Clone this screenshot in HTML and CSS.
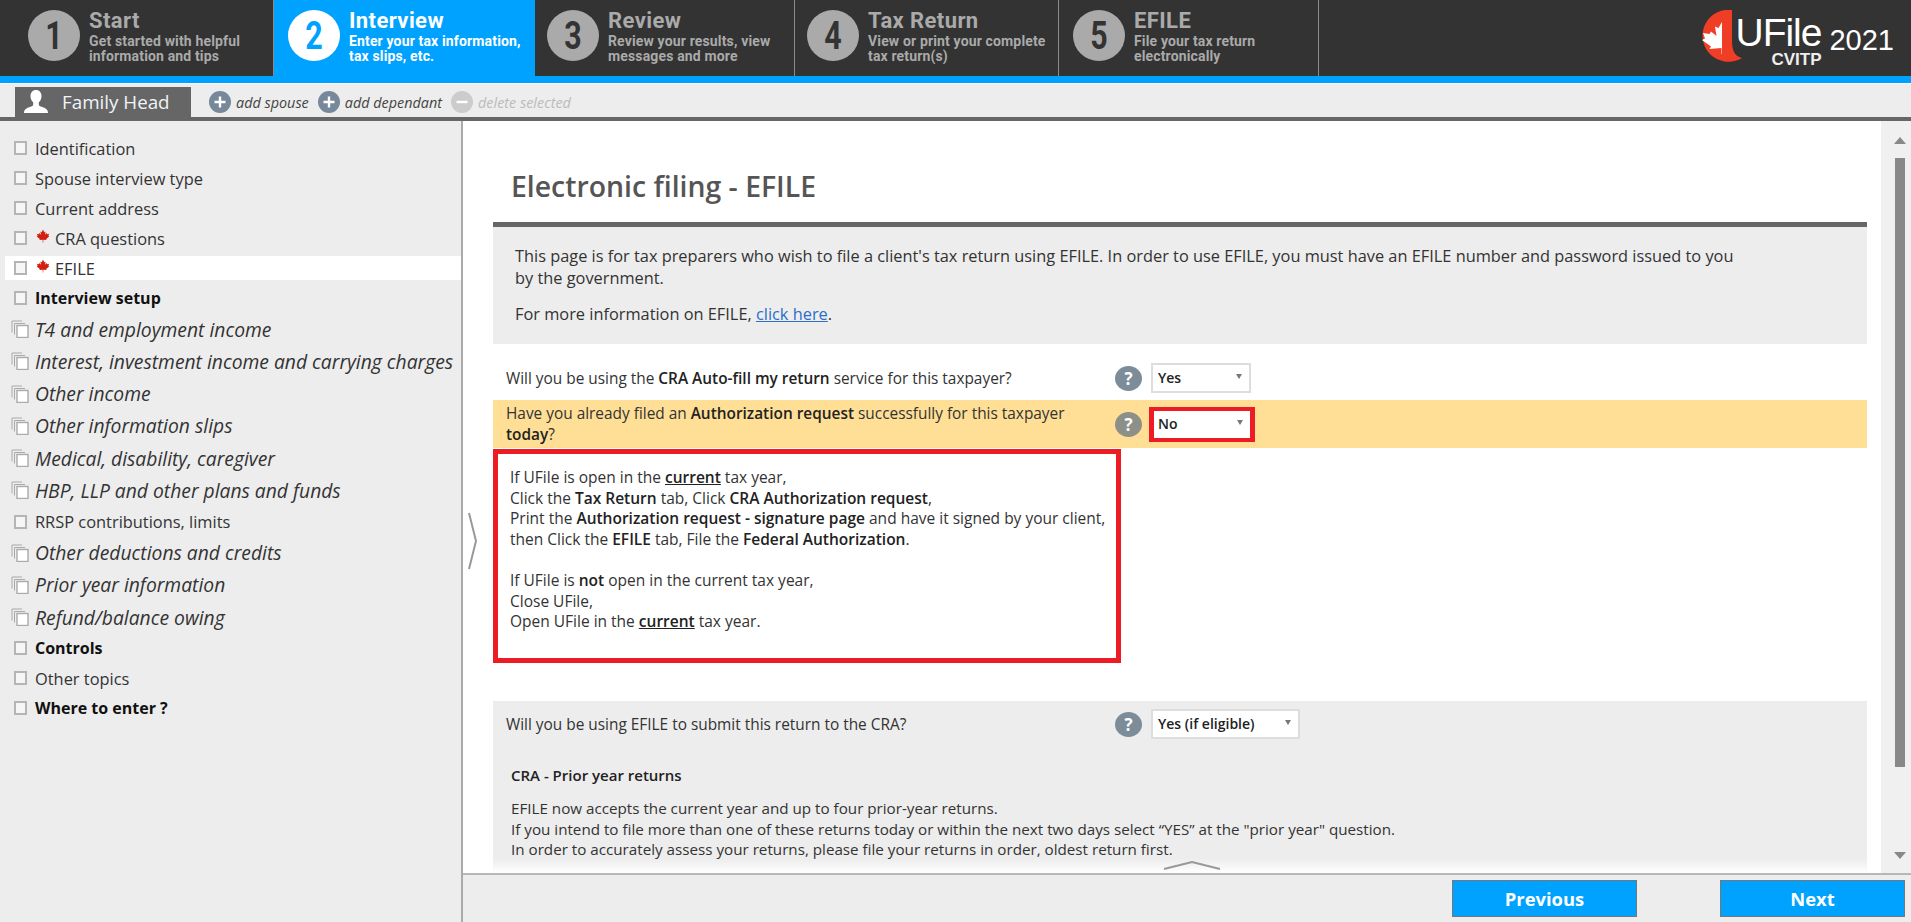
FILE: index.html
```html
<!DOCTYPE html>
<html lang="en">
<head>
    <meta charset="UTF-8">
    <meta name="viewport" content="width=device-width, initial-scale=1.0">
    <title>UFile CVITP 2021 - Electronic filing</title>
    <link rel="stylesheet" href="styles.css">
</head>
<body>
    <svg class="sprites" width="0" height="0">
        <symbol id="leaf" viewBox="0 0 24 24">
            <path d="M12 1 9.8 5.5 7.6 4.4 8.6 10 5.6 7 4.9 8.9 1.6 8.3 2.8 12 1.2 13 6.6 17.2 5.9 19 11.5 18.3V23h1V18.3L18.1 19 17.4 17.2 22.8 13 21.2 12 22.4 8.3 19.1 8.9 18.4 7 15.4 10 16.4 4.4 14.2 5.5Z"/>
        </symbol>
        <symbol id="pages" viewBox="0 0 18 18">
            <path d="M1 12.5V1h10M3.5 14.5V3.5H14" fill="none" stroke="#aaa" stroke-width="1"/>
            <rect x="6" y="5.5" width="11" height="12" fill="#fff" stroke="#aaa" stroke-width="1.4"/>
        </symbol>
        <symbol id="plus" viewBox="0 0 22 22">
            <circle cx="11" cy="11" r="11"/>
            <path d="M11 5.5v11M5.5 11h11" stroke="#fff" stroke-width="2.4"/>
        </symbol>
    </svg>

    <header class="top-bar">
        <nav class="steps">
            <div class="step step-first"><span class="step-num"><span class="step-digit">1</span></span><div><div class="step-title">Start</div><div class="step-desc">Get started with helpful<br>information and tips</div></div></div>
            <div class="step step-active"><span class="step-num"><span class="step-digit">2</span></span><div><div class="step-title">Interview</div><div class="step-desc">Enter your tax information,<br>tax slips, etc.</div></div></div>
            <div class="step step-third"><span class="step-num"><span class="step-digit">3</span></span><div><div class="step-title">Review</div><div class="step-desc">Review your results, view<br>messages and more</div></div></div>
            <div class="step step-fourth"><span class="step-num"><span class="step-digit">4</span></span><div><div class="step-title">Tax Return</div><div class="step-desc">View or print your complete<br>tax return(s)</div></div></div>
            <div class="step step-fifth"><span class="step-num"><span class="step-digit">5</span></span><div><div class="step-title">EFILE</div><div class="step-desc">File your tax return<br>electronically</div></div></div>
        </nav>
        <div class="logo">
            <svg class="logo-mark" width="50" height="52" viewBox="0 0 50 52">
                <path d="M36 0A26 26 0 1 0 46 48C38 46 36 40 36 30Z" fill="#f03e26"/>
                <path d="M26 12 22.5 18 19 16.5 20.5 26 15 21.5 13.5 24 7 23 9 28.5 6 30 15 36.5 13.5 39 25.5 38V44H26Z" fill="#fff"/>
            </svg>
            <div class="logo-name">
                <span class="logo-ufile">UFile</span>
                <span class="logo-cvitp">CVITP</span>
            </div>
            <span class="logo-year">2021</span>
        </div>
    </header>
    <div class="blue-line"></div>

    <div class="tab-bar">
        <div class="tab">
            <svg width="26" height="26" viewBox="0 0 26 26"><path d="M13 1c3.600 0 5.500 2.700 5.500 6 0 2.700-1.100 5-2.700 6.300v2.200c0 1.300 1 1.700 3.500 2.600 3 1.100 5.700 2.200 5.700 5.900H1c0-3.700 2.700-4.800 5.700-5.900 2.500-.9 3.500-1.300 3.500-2.600v-2.200C8.600 12 7.500 9.700 7.500 7c0-3.300 1.900-6 5.500-6Z" fill="#fff"/></svg>
            <span>Family Head</span>
        </div>
        <a class="tab-action"><svg width="22" height="22"><use href="#plus"/></svg>add spouse</a>
        <a class="tab-action"><svg width="22" height="22"><use href="#plus"/></svg>add dependant</a>
        <a class="tab-action tab-action-off"><svg width="22" height="22" viewBox="0 0 22 22"><circle cx="11" cy="11" r="11"/><path d="M5.500 11h11" stroke="#fff" stroke-width="2.400"/></svg>delete selected</a>
    </div>

    <div class="workspace">
        <aside class="sidebar">
            <div class="nav-item"><i class="box"></i>Identification</div>
            <div class="nav-item"><i class="box"></i>Spouse interview type</div>
            <div class="nav-item"><i class="box"></i>Current address</div>
            <div class="nav-item"><i class="box"></i><svg class="nav-leaf" width="14" height="14"><use href="#leaf"/></svg>CRA questions</div>
            <div class="nav-item nav-current"><i class="box"></i><svg class="nav-leaf" width="14" height="14"><use href="#leaf"/></svg>EFILE</div>
            <div class="nav-item nav-bold"><i class="box"></i>Interview setup</div>
            <div class="nav-group"><svg width="18" height="18"><use href="#pages"/></svg>T4 and employment income</div>
            <div class="nav-group"><svg width="18" height="18"><use href="#pages"/></svg>Interest, investment income and carrying charges</div>
            <div class="nav-group"><svg width="18" height="18"><use href="#pages"/></svg>Other income</div>
            <div class="nav-group"><svg width="18" height="18"><use href="#pages"/></svg>Other information slips</div>
            <div class="nav-group"><svg width="18" height="18"><use href="#pages"/></svg>Medical, disability, caregiver</div>
            <div class="nav-group"><svg width="18" height="18"><use href="#pages"/></svg>HBP, LLP and other plans and funds</div>
            <div class="nav-item"><i class="box"></i>RRSP contributions, limits</div>
            <div class="nav-group"><svg width="18" height="18"><use href="#pages"/></svg>Other deductions and credits</div>
            <div class="nav-group"><svg width="18" height="18"><use href="#pages"/></svg>Prior year information</div>
            <div class="nav-group"><svg width="18" height="18"><use href="#pages"/></svg>Refund/balance owing</div>
            <div class="nav-item nav-bold"><i class="box"></i>Controls</div>
            <div class="nav-item"><i class="box"></i>Other topics</div>
            <div class="nav-item nav-bold"><i class="box"></i>Where to enter ?</div>
        </aside>

        <div class="right-col">
            <div class="main-row">
                <main class="content">
                    <svg class="side-handle" width="11" height="58" viewBox="0 0 11 58"><path d="M2 1 9 29 2 57" fill="none" stroke="#999" stroke-width="2"/></svg>

                    <h1 class="page-title">Electronic filing - EFILE</h1>
                    <section class="intro">
                        <p>This page is for tax preparers who wish to file a client's tax return using EFILE. In order to use EFILE, you must have an EFILE number and password issued to you by the government.</p>
                        <p>For more information on EFILE, <a href="#">click here</a>.</p>
                    </section>

                    <div class="question question-first">
                        <div class="question-text">Will you be using the <b>CRA Auto-fill my return</b> service for this taxpayer?</div>
                        <span class="help">?</span>
                        <div class="select">Yes</div>
                    </div>
                    <div class="question question-warn">
                        <div class="question-text">Have you already filed an <b>Authorization request</b> successfully for this taxpayer <b>today</b>?</div>
                        <span class="help">?</span>
                        <div class="select select-flagged">No</div>
                    </div>

                    <div class="callout">
                        If UFile is open in the <b><u>current</u></b> tax year,<br>
                        Click the <b>Tax Return</b> tab, Click <b>CRA Authorization request</b>,<br>
                        Print the <b>Authorization request - signature page</b> and have it signed by your client,<br>
                        then Click the <b>EFILE</b> tab, File the <b>Federal Authorization</b>.<br>
                        <br>
                        If UFile is <b>not</b> open in the current tax year,<br>
                        Close UFile,<br>
                        Open UFile in the <b><u>current</u></b> tax year.
                    </div>

                    <section class="efile-section">
                        <div class="question question-plain">
                            <div class="question-text">Will you be using EFILE to submit this return to the CRA?</div>
                            <span class="help">?</span>
                            <div class="select select-wide">Yes (if eligible)</div>
                        </div>
                        <h3 class="note-title">CRA - Prior year returns</h3>
                        <p class="note">EFILE now accepts the current year and up to four prior-year returns.<br>
                        If you intend to file more than one of these returns today or within the next two days select “YES” at the "prior year" question.<br>
                        In order to accurately assess your returns, please file your returns in order, oldest return first.</p>
                    </section>

                    <div class="fade"></div>
                    <svg class="up-handle" width="58" height="9" viewBox="0 0 58 9"><path d="M1 8 29 1 57 8" fill="none" stroke="#999" stroke-width="2"/></svg>
                </main>
                <div class="scrollbar">
                    <i class="arrow-up"></i>
                    <i class="thumb"></i>
                    <i class="arrow-down"></i>
                </div>
            </div>
            <footer class="footer">
                <button>Previous</button>
                <button>Next</button>
            </footer>
        </div>
    </div>
</body>
</html>
```

FILE: styles.css
```css
* {
    box-sizing: border-box;
}
html, body {
    margin: 0;
    height: 922px;
    overflow: hidden;
}
body {
    display: flex;
    flex-direction: column;
    font-family: "Open Sans", "Noto Sans", sans-serif;
    font-size: 15px;
    color: #333;
    background: #fff;
}
b {
    font-weight: 600;
    color: #222;
}
.sprites {
    position: absolute;
}

/* top bar */
.top-bar {
    display: flex;
    justify-content: space-between;
    height: 76px;
    background: #333;
    font-family: "Roboto", "Liberation Sans", sans-serif;
}
.steps {
    display: flex;
}
.step {
    display: flex;
    align-items: flex-start;
    gap: 9px;
    width: 260px;
    padding: 10px 0 0 12px;
    border-right: 1px solid #8a8a8a;
    color: #aaa;
}
.step-first {
    width: 274px;
    padding-left: 28px;
}
.step-active {
    width: 261px;
    padding-left: 14px;
    background: #00a2ff;
    color: #fff;
    border-right: none;
}
.step-fourth {
    width: 264px;
}
.step-fifth {
    padding-left: 14px;
}
.step-num {
    flex: none;
    display: flex;
    align-items: center;
    justify-content: center;
    width: 52px;
    height: 51px;
    border-radius: 50%;
    background: #aaa;
    color: #333;
    font-size: 38px;
    font-weight: 700;
}
.step-digit {
    display: inline-block;
    transform: scaleX(.8);
}
.step-active .step-num {
    background: #fff;
    color: #00a2ff;
}
.step-title {
    font-size: 22px;
    font-weight: 700;
    letter-spacing: .4px;
    line-height: 22px;
}
.step-desc {
    font-size: 14px;
    font-weight: 700;
    letter-spacing: .15px;
    line-height: 15px;
    margin-top: 2px;
    white-space: nowrap;
}
.logo {
    display: flex;
    align-items: flex-start;
    padding: 10px 17px 0 0;
    color: #fff;
    font-family: "Liberation Sans", sans-serif;
}
.logo-name {
    display: flex;
    flex-direction: column;
    align-items: flex-end;
    margin: 4px 0 0 -11px;
}
.logo-ufile {
    font-size: 39px;
    letter-spacing: -1px;
    line-height: 38px;
}
.logo-cvitp {
    font-size: 17px;
    font-weight: 700;
    line-height: 15px;
    color: #eee;
}
.logo-year {
    font-size: 29px;
    line-height: 32px;
    margin: 14px 0 0 8px;
}
.blue-line {
    height: 7px;
    background: #00a2ff;
}

/* tab bar */
.tab-bar {
    display: flex;
    align-items: flex-end;
    height: 37px;
    margin-top: 1px;
    padding-left: 15px;
    background: #ededed;
    border-bottom: 4px solid #666;
}
.tab {
    display: flex;
    align-items: center;
    gap: 13px;
    width: 176px;
    height: 30px;
    padding-left: 8px;
    margin-right: 18px;
    background: #666;
    color: #f0f4f8;
    font-size: 18.8px;
}
.tab-action {
    display: flex;
    align-items: center;
    gap: 5px;
    height: 30px;
    margin-right: 9px;
    font-size: 14.4px;
    font-style: italic;
    fill: #76889a;
    color: #444;
}
.tab-action-off {
    color: #bbb;
    fill: #ccc;
}

/* sidebar */
.workspace {
    flex: 1;
    display: flex;
    min-height: 0;
}
.sidebar {
    flex: none;
    display: flex;
    flex-direction: column;
    width: 463px;
    padding-top: 12px;
    background: #ededed;
    border-right: 2px solid #aaa;
}
.nav-item, .nav-group {
    display: flex;
    align-items: center;
    margin: 3px 0 3px 5px;
    white-space: nowrap;
}
.nav-item {
    height: 24px;
    padding-left: 9px;
    font-size: 16.4px;
}
.nav-group {
    height: 26.25px;
    padding-left: 6px;
    gap: 6px;
    font-size: 19.3px;
    font-style: italic;
}
.nav-current {
    background: #fff;
}
.nav-bold {
    font-size: 16px;
    font-weight: 700;
    color: #111;
}
.box {
    flex: none;
    width: 13px;
    height: 14px;
    margin-right: 8px;
    background: #f6f6f6;
    border: 2px solid #b5b5b5;
}
.nav-leaf {
    flex: none;
    margin: -4px 5px 0 1px;
    fill: #d21f0f;
}

/* main */
.right-col {
    flex: 1;
    display: flex;
    flex-direction: column;
    min-width: 0;
}
.main-row {
    flex: 1;
    display: flex;
    min-height: 0;
}
.content {
    position: relative;
    flex: 1;
    padding: 0 14px 0 30px;
    overflow: hidden;
}
.page-title {
    margin: 0;
    padding: 47px 0 18px 18px;
    font-size: 28.4px;
    font-weight: 600;
    line-height: 36px;
    color: #555;
}
.intro {
    padding: 18px 130px 19px 22px;
    background: #ededed;
    border-top: 5px solid #666;
    font-size: 16.35px;
    line-height: 22px;
}
.intro p {
    margin: 0 0 14px;
}
.intro p:last-child {
    margin-bottom: 0;
}
.intro a {
    color: #2a6fc9;
}
.question {
    display: flex;
    align-items: center;
    padding-left: 13px;
    font-size: 15.4px;
    line-height: 21px;
}
.question-first {
    height: 56px;
    padding-top: 12px;
}
.question-warn {
    height: 48px;
    background: #ffdf96;
}
.question-plain {
    height: 46px;
}
.question-text {
    flex: none;
    width: 609px;
    padding-right: 40px;
}
.help {
    flex: none;
    display: flex;
    align-items: center;
    justify-content: center;
    width: 27px;
    height: 25px;
    margin-right: 9px;
    border-radius: 50%;
    background: #7d8c99;
    color: #fff;
    font-size: 17px;
    font-weight: 700;
}
.question-warn .help {
    background: #8c9089;
}
.select {
    position: relative;
    display: flex;
    align-items: center;
    width: 100px;
    height: 30px;
    padding: 0 0 2px 5px;
    background: #fff;
    border: 2px solid #ddd;
    color: #222;
    font-size: 14px;
    font-weight: 600;
}
.select::after {
    content: "";
    position: absolute;
    right: 7px;
    top: 9px;
    border: 3.5px solid transparent;
    border-top: 5px solid #777;
}
.select-flagged {
    width: 106px;
    height: 35px;
    margin-left: -2px;
    padding-left: 4px;
    border: solid #ed1c24;
    border-width: 4px 5px;
}
.select-wide {
    width: 149px;
}
.callout {
    width: 628px;
    height: 214px;
    margin-top: 1px;
    padding: 13px 0 0 12px;
    border: 5px solid #ed1c24;
    font-size: 15.5px;
    line-height: 20.6px;
    white-space: nowrap;
}
.efile-section {
    height: 220px;
    margin-top: 38px;
    background: #ededed;
}
.note-title {
    margin: 18px 0 0 18px;
    font-size: 15px;
    font-weight: 600;
    line-height: 20px;
    color: #222;
}
.note {
    margin: 13px 0 0 18px;
    font-size: 15.2px;
    line-height: 20.6px;
}
.side-handle {
    position: absolute;
    left: 4px;
    top: 391px;
}
.up-handle {
    position: absolute;
    left: 700px;
    bottom: 3px;
}
.fade {
    position: absolute;
    left: 30px;
    right: 14px;
    bottom: 0;
    height: 14px;
    background: linear-gradient(rgba(255, 255, 255, 0), #fff);
}

/* scrollbar */
.scrollbar {
    flex: none;
    display: flex;
    flex-direction: column;
    width: 30px;
    padding: 16px 0 0 14px;
    background: #f0f0f0;
}
.arrow-up {
    width: 0;
    margin-left: -1px;
    border: 6px solid transparent;
    border-top: 0;
    border-bottom: 7px solid #888;
}
.thumb {
    width: 10px;
    height: 609px;
    margin-top: 14px;
    background: #888;
}
.arrow-down {
    width: 0;
    margin: 85px 0 0 -1px;
    border: 6px solid transparent;
    border-bottom: 0;
    border-top: 7px solid #888;
}

/* footer */
.footer {
    flex: none;
    display: flex;
    justify-content: flex-end;
    gap: 83px;
    height: 49px;
    padding: 5px 6px 0 0;
    background: #ededed;
    border-top: 2px solid #b3b8bc;
}
.footer button {
    width: 185px;
    height: 37px;
    background: #00a2ff;
    border: 1px solid #777;
    color: #fff;
    font-family: inherit;
    font-size: 18.4px;
    font-weight: 700;
}
```
